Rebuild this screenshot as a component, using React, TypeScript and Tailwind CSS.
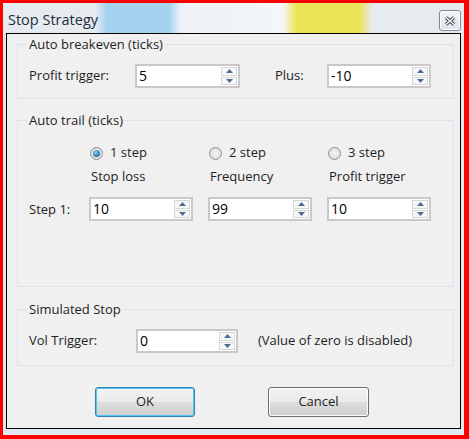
import React from "react";

function Arrow({ up }: { up?: boolean }) {
  return (
    <svg width="7" height="4" viewBox="0 0 7 4">
      <path d={up ? "M0 4 L3.5 0 L7 4 Z" : "M0 0 L3.5 4 L7 0 Z"} fill="#4f6a98" />
    </svg>
  );
}

function Spin({ value, className }: { value: string; className: string }) {
  return (
    <div className={`${className} h-[24px] flex bg-white border-2 border-[#c9c9c9]`}>
      <div className="flex-1 pl-[2px] leading-[20px] text-[14px] text-black">{value}</div>
      <div className="w-[18px] flex flex-col gap-[1px] p-[1px]">
        <div className="flex-1 flex items-center justify-center border border-[#d6d6d6] bg-[#f7f7f7]">
          <Arrow up />
        </div>
        <div className="flex-1 flex items-center justify-center border border-[#d6d6d6] bg-[#f7f7f7]">
          <Arrow />
        </div>
      </div>
    </div>
  );
}

function Radio({ checked, label }: { checked?: boolean; label: string }) {
  return (
    <div className="flex items-center h-[16px] pl-[1px]">
      <span className="w-[13px] h-[13px] rounded-full border border-[#8e8f8f] bg-[radial-gradient(circle,#f4f4f4,#d6d6d6)] flex items-center justify-center">
        {checked && (
          <span className="w-[7px] h-[7px] rounded-full bg-[radial-gradient(circle_at_40%_35%,#8fd3f5,#1c6da8_70%)]" />
        )}
      </span>
      <span className="ml-[7px]">{label}</span>
    </div>
  );
}

export default function App() {
  return (
    <div className="w-[469px] h-[439px] bg-[#ff0000] pt-[3px] pl-[3px] pr-[5px] pb-[4px] font-['Open_Sans',sans-serif] text-[13px] text-[#1e1e1e]">
      <div className="h-full bg-[#e2e9f0] px-[3px] pb-[6px] flex flex-col">
        {/* title bar */}
        <div className="h-[30px] -mx-[3px] px-[3px] flex justify-between items-start bg-[linear-gradient(to_right,#e6ebf0_0px,#e6ebf0_92px,#a4d3f0_104px,#a4d3f0_166px,#eef2f6_178px,#f4f6f8_280px,#ece255_294px,#ece255_356px,#e6ebf0_370px)]">
          <div className="pl-[2px] pt-[7px] text-[14.5px] leading-[20px] text-[#1f2b3a]">Stop Strategy</div>
          <div className="mt-[7px] w-[22px] h-[21px] rounded-[3px] border border-[#7d8996] bg-[linear-gradient(#f4f6f8,#dde3ea)] shadow-[inset_0_0_0_1px_#ffffff] flex items-center justify-center">
            <svg width="12" height="10" viewBox="0 0 12 10">
              <path d="M2 1.5 L10 8.5 M10 1.5 L2 8.5" stroke="#3b4450" strokeWidth="3.4" />
              <path d="M2 1.5 L10 8.5 M10 1.5 L2 8.5" stroke="#ffffff" strokeWidth="1.4" />
            </svg>
          </div>
        </div>

        {/* client area */}
        <div className="h-[396px] border border-black bg-[#f0f0f0]">
          <fieldset className="border border-[#dce4ea] ml-[10px] mr-[6px] mt-[3px] pb-[10px]">
            <legend className="ml-[9px] px-[2px] leading-[14px]">Auto breakeven (ticks)</legend>
            <div className="mt-[13px] pl-[11px] flex items-center">
              <span className="w-[106px]">Profit trigger:</span>
              <Spin value="5" className="w-[105px]" />
              <span className="ml-[35px] w-[52px]">Plus:</span>
              <Spin value="-10" className="w-[104px]" />
            </div>
          </fieldset>

          <fieldset className="border border-[#dce4ea] ml-[10px] mr-[6px] mt-[14px] pb-[65px]">
            <legend className="ml-[9px] px-[2px] leading-[14px]">Auto trail (ticks)</legend>
            <div className="mt-[18px] pl-[11px] grid grid-cols-[45px_104px_104px_104px] gap-x-[15px]">
              <span />
              <Radio checked label="1 step" />
              <Radio label="2 step" />
              <Radio label="3 step" />
            </div>
            <div className="mt-[7px] pl-[11px] grid grid-cols-[45px_104px_104px_104px] gap-x-[15px] leading-[16px]">
              <span />
              <span className="pl-[2px]">Stop loss</span>
              <span className="pl-[2px]">Frequency</span>
              <span className="pl-[2px]">Profit trigger</span>
            </div>
            <div className="mt-[13px] pl-[11px] grid grid-cols-[45px_104px_104px_104px] gap-x-[15px] items-center">
              <span className="pt-[2px]">Step 1:</span>
              <Spin value="10" className="w-[104px]" />
              <Spin value="99" className="w-[104px]" />
              <Spin value="10" className="w-[104px]" />
            </div>
          </fieldset>

          <fieldset className="border border-[#dce4ea] ml-[10px] mr-[6px] mt-[15px] pb-[12px]">
            <legend className="ml-[9px] px-[2px] leading-[14px]">Simulated Stop</legend>
            <div className="mt-[13px] pl-[11px] flex items-center">
              <span className="w-[107px]">Vol Trigger:</span>
              <Spin value="0" className="w-[102px]" />
              <span className="ml-[20px]">(Value of zero is disabled)</span>
            </div>
          </fieldset>

          <div className="mt-[21px] ml-[88px] flex gap-[73px]">
            <button className="w-[100px] h-[30px] rounded-[3px] border border-[#3c7fb1] shadow-[inset_0_0_0_1px_#48c8f5] bg-[linear-gradient(#f2f2f2,#ebebeb_50%,#dddddd_50%,#cfcfcf)] text-[#1e1e1e]">
              OK
            </button>
            <button className="w-[101px] h-[30px] rounded-[3px] border border-[#707070] shadow-[inset_0_0_0_1px_#fcfcfc] bg-[linear-gradient(#f2f2f2,#ebebeb_50%,#dddddd_50%,#cfcfcf)] text-[#1e1e1e]">
              Cancel
            </button>
          </div>
        </div>
      </div>
    </div>
  );
}
